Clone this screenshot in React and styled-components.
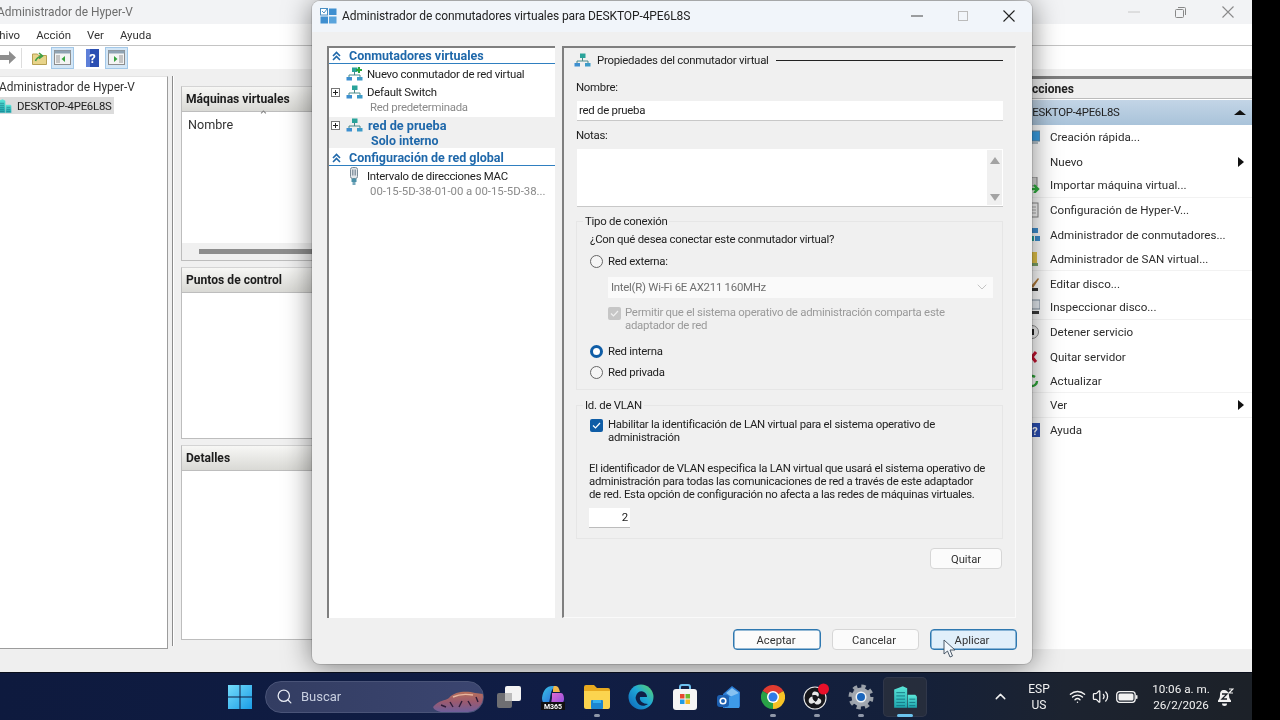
import React from "react";
import styled, { createGlobalStyle, css } from "styled-components";
import { Search, Wifi, Volume2, ChevronUp, ChevronDown } from "lucide-react";

const FONT = `Roboto, "Noto Sans", "Liberation Sans", sans-serif`;

const Global = createGlobalStyle`
  html, body { margin: 0; padding: 0; background: #000; overflow: hidden; }
  body { font-family: ${FONT}; font-size: 12px; color: #222; }
  * { box-sizing: border-box; }
`;

const uiText = css`font-size: 11.4px; letter-spacing: -0.26px;`;

const Screen = styled.div`
  position: relative; width: 1280px; height: 720px; overflow: hidden; background: #000;
  filter: blur(0.35px);
`;
const Desktop = styled.div`
  position: relative; width: 1252px; height: 672px; overflow: hidden; background: #f0f0f0;
`;

/* ---------- background window ---------- */
const HostWindow = styled.div`
  position: absolute; left: -30px; top: 0; width: 1282px; height: 672px;
  display: flex; flex-direction: column; background: #f0f0f0;
`;
const HostTitle = styled.div`
  height: 24px; display: flex; align-items: center; padding-left: 27px; flex: none;
  background: #f2f3f5; color: #6e6e6e; font-size: 11.9px;
`;
const HostControls = styled.div`margin-left: auto; display: flex; align-items: center;`;
const CtrlCell = styled.div`
  width: ${p => p.$w || 47}px; height: 23px; display: flex; align-items: center; justify-content: center;
  color: ${p => p.$c || "#999"};
`;
const MenuBar = styled.div`
  height: 22px; background: #fff; border-bottom: 1px solid #c4c4c4; display: flex; align-items: center;
  flex: none; gap: 16px; padding: 1px 0 0 12px; font-size: 11.4px; color: #333;
`;
const Toolbar = styled.div`
  height: 23px; background: #fff; display: flex; align-items: center; flex: none; padding-left: 30px;
`;
const ToolSep = styled.div`width: 1px; height: 20px; background: #ddd; margin: 0 6px 0 5px;`;
const ToolBtn = styled.div`
  width: 23px; height: 22px; display: flex; align-items: center; justify-content: center;
  margin-right: ${p => p.$mr || 0}px;
  ${p => p.$on && css`background: #d3e6f6; border: 1px solid #a3c8e8;`}
`;
const HostBody = styled.div`
  flex: 1; min-height: 0; display: flex; padding-top: 7px;
`;
const Tree = styled.div`
  width: 198px; background: #fff; border-right: 1px solid #9c9c9c; border-bottom: 1px solid #9c9c9c;
  padding-top: 3px; margin-bottom: 1px; border-top: 1px solid #e4e4e4; flex: none;
`;
const TreeRoot = styled.div`padding-left: 29px; height: 17px; line-height: 15px; font-size: 11.9px; color: #333;`;
const TreeNode = styled.div`
  margin-left: 14px; width: 130px; height: 17px; display: flex; align-items: center;
  gap: 5px; padding-left: 12px; background: #dcdcdc; color: #222; ${uiText}
`;
const Center = styled.div`
  width: 848px; margin-left: 4px; flex: none; padding: 10px 0 8px 8px;
  border-left: 1px solid #8c8c8c; margin-bottom: 4px; display: flex; flex-direction: column; gap: 6px;
  box-shadow: inset 1px 0 0 #fff;
`;
const Pane = styled.div`
  height: ${p => p.$h}px; flex: none; background: #fff; border: 1px solid #bdbdbd; border-top-color: #d4d4d4; position: relative;
  display: flex; flex-direction: column;
`;
const PaneHead = styled.div`
  height: 25px; flex: none; padding-left: 4px; display: flex; align-items: center;
  background: linear-gradient(#f7f7f5, #d9d9d5); border-bottom: 1px solid #bdbdbd;
  font-weight: 700; font-size: 12.1px; color: #1c1c1c;
`;
const ColHead = styled.div`
  padding: 5px 0 0 6px; font-size: 12.6px; color: #333; position: relative; flex: 1;
`;
const SortCaret = styled.span`position: absolute; left: 76px; top: -2px; color: #888; line-height: 1;`;
const HScroll = styled.div`
  height: 17px; flex: none; background: #f0f0f0; padding: 6px 0 0 17px;
`;
const HThumb = styled.div`height: 5px; width: 400px; background: #8d8d8d;`;

const Actions = styled.div`
  width: 232px; flex: none; display: flex; flex-direction: column; margin-bottom: 1px;
  background: #fff; border-top: 3px solid #7d7d7d;
`;
const ActionsHead = styled.div`
  height: 20px; flex: none; padding-left: 4px; display: flex; align-items: center; background: #f0f0f0;
  font-weight: 700; font-size: 12px; color: #222; border-bottom: 1px solid #bbb;
`;
const ActionsHost = styled.div`
  height: 25px; margin-top: 1px; flex: none; padding: 0 6px 1px 5px; display: flex; align-items: center; justify-content: space-between;
  background: linear-gradient(#c3d5e6, #a9c3da); color: #222; ${uiText}
`;
const ActionRow = styled.div`
  height: 24.4px; flex: none; display: flex; align-items: center; padding: 0 8px 0 4px; font-size: 11.6px; color: #2c2c2c;
  ${p => p.$sep && css`border-bottom: 1px solid #f2f2f2;`}
`;
const ActionIconBox = styled.div`width: 16px; height: 16px; margin-right: 10px; flex: none; display:flex;`;
const RightTri = styled.span`
  margin-left: auto; width: 0; height: 0; border-left: 6px solid #111; border-top: 5px solid transparent; border-bottom: 5px solid transparent;
`;
const UpTri = styled.span`
  width: 0; height: 0; border-bottom: 5px solid #111; border-left: 6px solid transparent; border-right: 6px solid transparent;
`;
const StatusBar = styled.div`height: 22px; flex: none; background: #efefef;`;

/* ---------- dialog ---------- */
const Dialog = styled.div`
  position: absolute; left: 312px; top: 1px; width: 720px; height: 663px; z-index: 2;
  background: #f0f0f0; border-radius: 8px; display: flex; flex-direction: column;
  box-shadow: 0 2px 28px rgba(0,0,0,.5), 0 0 0 1px rgba(0,0,0,.12);
`;
const DlgTitle = styled.div`
  height: 31px; flex: none; display: flex; align-items: center; padding: 0 0 2px 8px; border-radius: 8px 8px 0 0;
  background: #f1f5fa; font-size: 12px; letter-spacing: -0.1px; color: #222;
`;
const DlgTitleText = styled.span`margin-left: 5px;`;
const DlgControls = styled.div`margin-left: auto; display: flex; align-items: center;`;
const DlgMain = styled.div`
  flex: none; height: 572px; margin-top: 14px; padding: 0 16px 0 15px; display: flex; gap: 7px;
`;
const ListPanel = styled.div`
  width: 228px; flex: none; background: #fff; border-left: 2px solid #7f7f7f; border-top: 2px solid #7f7f7f;
`;
const ListHead = styled.div`
  height: 16px; padding-left: 3px; display: flex; align-items: center; gap: 8px;
  border-bottom: 1px solid #2f7fc0; color: #1f68aa; font-weight: 700; font-size: 12.5px;
  margin: ${p => p.$mt || 0}px 0 1px;
`;
const ListRow = styled.div`
  display: grid; grid-template-columns: 17px 21px 1fr; align-items: center; height: ${p => p.$h || 18}px; color: #222; ${uiText}
`;
const Expander = styled.span`
  width: 9px; height: 9px; margin-left: 2px; border: 1px solid #777; position: relative; display: block; background: #fff;
  &::before { content: ""; position: absolute; left: 1px; right: 1px; top: 3px; height: 1px; background: #222; }
  &::after { content: ""; position: absolute; top: 1px; bottom: 1px; left: 3px; width: 1px; background: #222; }
`;
const ListSub = styled.div`
  padding-left: 41px; margin-top: -1px; height: 15px; line-height: 15px; color: #8a8a8a; white-space: nowrap; ${uiText}
  ${p => p.$digits && css`letter-spacing: -0.02px;`}
`;
const ListSelected = styled.div`background: #f0f0f0; height: 31px; margin-top: 2px;`;
const BoldBlue = styled.span`color: #1f68aa; font-weight: 700; font-size: 12.7px; letter-spacing: 0; margin-left: ${p => p.$ml || 0}px;`;
const SelectedSub = styled.div`padding-left: 42px; height: 15px; line-height: 15px; color: #1f68aa; font-weight: 700; font-size: 12.4px;`;

const PropPanel = styled.div`
  flex: 1; min-width: 0; border-left: 2px solid #7f7f7f; border-top: 2px solid #7f7f7f; padding: 4px 12px 0 12px;
  border-bottom: 1px solid #fafafa; border-right: 1px solid #fafafa;
  display: flex; flex-direction: column; background: #f0f0f0;
`;
const PropHead = styled.div`height: 16px; margin-left: -2px; display: flex; align-items: center; gap: 6px; color: #222; line-height: 18px; ${uiText}`;
const PropRule = styled.div`flex: 1; height: 1px; background: #222; margin-left: 1px;`;
const FieldLabel = styled.div`height: 16px; line-height: 16px; margin-top: ${p => p.$mt}px; color: #222; ${uiText}`;
const TextField = styled.div`
  margin: 6px 0 0 1px; height: 20px; background: #fff; border-bottom: 1px solid #c8c8c8; padding: 0 2px;
  line-height: 18px; color: #222; ${uiText}
`;
const NotesField = styled.div`
  margin: 6px 0 0 1px; height: 58px; background: #fff; border-bottom: 1px solid #c8c8c8; display: flex; justify-content: flex-end;
`;
const NotesScroll = styled.div`
  width: 17px; background: #f0f0f0; border: 1px solid #fff; display: flex; flex-direction: column; align-items: center; justify-content: space-between; padding: 7px 0 4px;
`;
const ScrollArrow = styled.span`
  width: 0; height: 0; border-left: 5.5px solid transparent; border-right: 5.5px solid transparent;
  ${p => p.$up ? css`border-bottom: 7px solid #a3a3a3;` : css`border-top: 7px solid #a3a3a3;`}
`;
const Group = styled.div`
  position: relative; margin-top: ${p => p.$mt}px; height: ${p => p.$h}px; flex: none; border: 1px solid #e6e6e6;
  padding: ${p => p.$pt}px 10px 0 13px; display: flex; flex-direction: column; background: #f0f0f0;
`;
const Legend = styled.div`
  position: absolute; left: 6px; top: -8px; padding: 0 2px; background: #f0f0f0; height: 15px; line-height: 14px; color: #222; ${uiText}
`;
const Hint = styled.div`height: 16px; line-height: 17px; color: #222; ${uiText}`;
const RadioRow = styled.div`
  height: 16px; display: flex; align-items: center; gap: 5px; margin-top: ${p => p.$mt}px; color: #222; line-height: 18px; ${uiText}
`;
const Radio = styled.span`
  width: 13px; height: 13px; border-radius: 50%; flex: none; background: ${p => p.$on ? "#fff" : "#f5f5f5"};
  border: ${p => p.$on ? "3.5px solid #0f5da6" : "1px solid #666"};
`;
const SelectBox = styled.div`
  margin: 8px 0 0 18px; height: 21px; width: 385px; background: #fafafa; color: #6f6f6f; display: flex; align-items: center; justify-content: space-between;
  padding: 0 3px 1px 3px; ${uiText}
`;
const DisabledCheckRow = styled.div`margin: 8px 0 0 18px; display: flex; gap: 4px; height: 26px;`;
const DisabledText = styled.div`width: 345px; line-height: 13px; color: #9a9a9a; ${uiText}`;
const CheckBox = styled.span`
  width: 13px; height: 13px; margin-top: 1px; border-radius: 2px; flex: none; display: flex; align-items: center; justify-content: center;
  background: ${p => p.$on ? "#0f5da6" : "#c6c6c6"};
`;
const CheckRow = styled.div`display: flex; gap: 5px; height: 26px; line-height: 13px; color: #222; ${uiText}`;
const CheckText = styled.div`width: 360px;`;
const Para = styled.div`margin: 18px 0 0 -1px; line-height: 13px; width: 400px; color: #222; white-space: nowrap; ${uiText} letter-spacing: -0.3px;`;
const NumberField = styled.div`
  margin: 7px 0 0 -1px; height: 20px; width: 41px; background: #fff; border-bottom: 1px solid #bcbcbc; text-align: right; padding-right: 2px; line-height: 18px; ${uiText}
`;
const PushBtn = styled.div`
  border-radius: 4px; text-align: center; font-size: 11.2px; color: #333;
  width: ${p => p.$w}px; height: 21px; line-height: 21px; flex: none; padding-right: ${p => p.$pr || 0}px;
  background: ${p => p.$bg || "#fbfbfb"}; border: 1px solid ${p => p.$line || "#d6d6d6"};
  ${p => p.$thick && css`box-shadow: inset 0 0 0 0.5px ${p.$line};`}
`;
const QuitBtn = styled(PushBtn)`align-self: flex-end; margin: 9px 1px 0 0;`;
const DlgFooter = styled.div`
  flex: none; display: flex; justify-content: flex-end; gap: 11px; padding: 11px 15px 0 0;
`;

/* ---------- taskbar ---------- */
const Taskbar = styled.div`
  width: 1252px; height: 48px; display: flex; align-items: center; padding-left: 228px; position: relative; z-index: 3;
  background: linear-gradient(90deg, #0e1a3e 0%, #101d45 45%, #14203a 72%, #1c2330 85%, #1c2128 100%);
  border-top: 1px solid #0a0f1c;
`;
const SearchPill = styled.div`
  margin-left: 13px; width: 219px; height: 32px; border-radius: 16px; border: 1px solid #4a5478;
  background: linear-gradient(90deg, #333d62, #3b4570); color: #c8cfe0; display: flex; align-items: center; padding-left: 10px; gap: 8px;
  font-size: 13px; position: relative; overflow: hidden;
`;
const SearchArt = styled.svg`position: absolute; right: 0; top: 0;`;
const AppRow = styled.div`display: flex; margin-left: 3px; align-items: center;`;
const AppCell = styled.div`
  position: relative; width: 44px; height: 40px; display: flex; align-items: center; justify-content: center; border-radius: 5px;
  ${p => p.$active && css`background: #262d3c; box-shadow: inset 0 0 0 1px #30374a;`}
`;
const Pip = styled.span`
  position: absolute; bottom: 0; left: 50%; transform: translateX(-50%); height: 3px; border-radius: 2px;
  width: ${p => p.$wide ? 16 : 6}px; background: ${p => p.$wide ? "#6cc4ee" : "#8f97a8"};
`;
const Tray = styled.div`margin-left: auto; display: flex; align-items: center; color: #f2f2f2; padding-right: 17px;`;
const TrayCell = styled.div`
  width: ${p => p.$w}px; margin-left: ${p => p.$ml || 0}px; display: flex; align-items: center; justify-content: center;
  flex-direction: column; text-align: center; font-size: ${p => p.$fs || 11.7}px; line-height: 16px; white-space: nowrap;
`;
const CursorMark = styled.svg`position: absolute; left: 943px; top: 639px; z-index: 4;`;
const Block = styled.svg`display: block; flex: none;`;

/* ---------- icons ---------- */
const SwitchIcon = ({ plus }) => (
  <Block width="17" height="14" viewBox="0 0 17 14">
    <path d="M8.500 4v4M3 11V8h11v3" stroke="#4a8a8a" fill="none" />
    <rect x="6" y="0.500" width="5.500" height="4.500" fill="#2aa39a" />
    <rect x="0.500" y="10" width="5.500" height="3.500" fill="#3d8fd0" />
    <rect x="11" y="10" width="5.500" height="3.500" fill="#3d9bc8" />
    {plus && <path d="M12 0h2v2h2v2h-2v2h-2V4h-2V2h2z" fill="#27a53a" />}
  </Block>
);
const TitleIcon = () => (
  <Block width="17" height="16" viewBox="0 0 17 16">
    <rect x="0.500" y="0.500" width="7" height="6.500" fill="#fff" stroke="#4a8fc4" />
    <path d="M2 3l2 2 3-4" stroke="#4a8fc4" fill="none" />
    <rect x="9" y="0.500" width="7.500" height="6.500" fill="#3f8fd0" />
    <rect x="0.500" y="8.500" width="7.500" height="7" fill="#3f8fd0" />
    <rect x="9" y="8.500" width="7.500" height="7" fill="#5aa4dc" />
  </Block>
);
const DoubleUp = () => (
  <Block width="9" height="10" viewBox="0 0 9 10">
    <path d="M1 5l3.500-3.500L8 5M1 9l3.500-3.500L8 9" stroke="#1f68aa" strokeWidth="1.600" fill="none" />
  </Block>
);
const NicSlot = styled.span`display: block; padding-left: 3px;`;
const NicIcon = () => (
  <NicSlot>
    <Block width="10" height="18" viewBox="0 0 10 18">
      <rect x="1.500" y="0.500" width="7" height="11" rx="2" fill="#e2e6ea" stroke="#7a8a96" />
      <path d="M3.500 2.500v6M5 2.500v6M6.500 2.500v6" stroke="#8a98a4" />
      <rect x="2.500" y="11.500" width="5" height="3.500" fill="#4a90a8" />
      <rect x="3.500" y="15" width="3" height="3" fill="#76a8bc" />
    </Block>
  </NicSlot>
);
const FolderUp = () => (
  <Block width="15" height="14" viewBox="0 0 15 14">
    <path d="M0.500 3h5l1 1.500h8v9h-14z" fill="#e8d48a" stroke="#b7a052" />
    <path d="M3.500 10c1-3 3-4 6-5M7 2l3.500 3L7 7.500" stroke="#3fa046" strokeWidth="1.600" fill="none" />
  </Block>
);
const PanelIcon = ({ right }) => (
  <Block width="17" height="15" viewBox="0 0 17 15">
    <rect x="0.500" y="0.500" width="16" height="14" fill="#f4f4f4" stroke="#8d8d8d" />
    <rect x="0.500" y="0.500" width="16" height="3" fill="#8fa3b3" />
    <rect x={right ? 11 : 2} y="5" width="4" height="8" fill="#c4c4c4" />
    <path d={right ? "M6 6l3.500 3L6 12z" : "M11 6L7.500 9 11 12z"} fill="#36a33e" />
  </Block>
);
const HelpIcon = () => (
  <Block width="13" height="18" viewBox="0 0 13 18">
    <rect width="13" height="18" fill="#2b4fb3" />
    <rect x="0" y="0" width="4" height="18" fill="#5d7fd8" />
    <text x="6.500" y="14" textAnchor="middle" fontSize="13" fontWeight="700" fill="#fff" fontFamily={FONT}>?</text>
  </Block>
);
const BuildingIcon = ({ size = 16 }) => (
  <Block width={size} height={size} viewBox="0 0 24 24">
    <defs>
      <linearGradient id="bld" x1="0" y1="0" x2="0" y2="1"><stop offset="0" stopColor="#5be6d8" /><stop offset="1" stopColor="#1da6ae" /></linearGradient>
    </defs>
    <path d="M2 5l8-3 4 2v18H2z" fill="url(#bld)" />
    <path d="M14.500 10h7l1.500 1.500V22h-8.500z" fill="url(#bld)" />
    <path d="M4 8h8M4 11h8M4 14h8M4 17h8M4 20h8M16 14h5.500M16 17h5.500M16 20h5.500" stroke="#14707e" strokeWidth="0.800" />
  </Block>
);
const RowIcon = ({ kind }) => {
  const map = {
    quick: <><rect x="3" y="2" width="13" height="10" fill="#3aa0e6" stroke="#6a8aa0" /><rect x="6" y="13" width="8" height="2" fill="#b8c4cc" /></>,
    import: <><rect x="5" y="0" width="8" height="9" fill="#d8d8d8" stroke="#888" /><path d="M6 12h7M10 8l4 4-4 4" stroke="#2fae3e" strokeWidth="2.400" fill="none" /></>,
    config: <><rect x="5" y="1" width="9" height="14" fill="#fafafa" stroke="#8a8a8a" /><path d="M7 5h5M7 8h5M7 11h5" stroke="#aaa" /></>,
    switch: <><rect x="8" y="1" width="6" height="5" fill="#3f8fd0" /><rect x="5" y="9" width="5" height="5" fill="#2aa39a" /><rect x="11" y="9" width="5" height="5" fill="#3d8fd0" /></>,
    san: <><path d="M5 1h8v11H5z" fill="#e6c64a" /><path d="M5 12h9v3H5z" fill="#7fa56a" /></>,
    edit: <><path d="M7 10l7-8 1 1-6 9z" fill="#b07a3a" /><rect x="5" y="12" width="9" height="3" fill="#333" /></>,
    inspect: <><rect x="5" y="1" width="11" height="9" fill="#e8eef4" stroke="#7f8f9f" /><rect x="6" y="12" width="9" height="3" fill="#3a3a3a" /></>,
    stop: <><circle cx="8" cy="8" r="6.500" fill="#f2f2f2" stroke="#8a8a8a" /><rect x="6" y="5" width="4" height="6" fill="#222" /></>,
    remove: <path d="M4 3l8 10M12 3L4 13" stroke="#c41230" strokeWidth="3" />,
    refresh: <path d="M13 8a5 5 0 1 1-2-4" stroke="#2fa83a" strokeWidth="2.400" fill="none" />,
    help: <><rect x="6" y="1" width="10" height="14" fill="#2b4fb3" /><text x="11" y="12.500" textAnchor="middle" fontSize="11" fontWeight="700" fill="#fff" fontFamily={FONT}>?</text></>,
  };
  return <Block width="16" height="16" viewBox="0 0 16 16">{map[kind]}</Block>;
};

const WinLogo = () => (
  <Block width="24" height="24" viewBox="0 0 24 24">
    <defs><linearGradient id="w" x1="0" y1="0" x2="1" y2="1"><stop offset="0" stopColor="#74dcfb" /><stop offset="1" stopColor="#1a9ce6" /></linearGradient></defs>
    <path d="M0 0h11.500v11.500H0zM12.500 0H24v11.500H12.500zM0 12.500h11.500V24H0zM12.500 12.500H24V24H12.500z" fill="url(#w)" />
  </Block>
);
const TaskViewIcon = () => (
  <Block width="24" height="22" viewBox="0 0 24 22">
    <rect x="0" y="7" width="15" height="15" rx="2" fill="#6e6e72" />
    <rect x="8" y="0" width="16" height="15" rx="2" fill="#f3f3f3" />
    <rect x="8" y="7" width="7" height="8" fill="#bcbcbc" />
  </Block>
);
const M365Icon = () => (
  <Block width="26" height="26" viewBox="0 0 26 26">
    <defs>
      <linearGradient id="m1" x1="0" y1="0" x2="1" y2="1"><stop offset="0" stopColor="#38c6e8" /><stop offset="1" stopColor="#2b62d8" /></linearGradient>
      <linearGradient id="m2" x1="0" y1="0" x2="1" y2="1"><stop offset="0" stopColor="#e66ad0" /><stop offset="1" stopColor="#8a4fe0" /></linearGradient>
    </defs>
    <path d="M2 14C3 6 7 2 12 2h5c-5 1-6 6-7 12l-1 5H5c-2 0-3-2-3-5z" fill="url(#m1)" />
    <path d="M12 9h9c2 0 3 3 3 6 0 3-2 5-5 5h-8l1-6c0-3 0-5 0-5z" fill="url(#m2)" />
    <path d="M14 2h2c2 0 3 2 4 6h-7c0-3 0-5 1-6z" fill="#f2b84a" />
    <rect x="1" y="18" width="24" height="8" fill="#101010" />
    <text x="13" y="24.800" textAnchor="middle" fontSize="7" fontWeight="700" fill="#fff" fontFamily={FONT}>M365</text>
  </Block>
);
const FolderIcon = () => (
  <Block width="26" height="24" viewBox="0 0 26 24">
    <path d="M0 2a2 2 0 0 1 2-2h8l3 3h11a2 2 0 0 1 2 2v3H0z" fill="#e7a91f" />
    <path d="M0 6h26v16a2 2 0 0 1-2 2H2a2 2 0 0 1-2-2z" fill="#fbd44f" />
    <rect x="7" y="15" width="12" height="9" rx="1" fill="#1b86d0" />
    <rect x="9" y="15" width="8" height="3" fill="#35b0ee" />
  </Block>
);
const EdgeIcon = () => (
  <Block width="26" height="26" viewBox="0 0 26 26">
    <defs>
      <linearGradient id="e1" x1="0" y1="1" x2="1" y2="0"><stop offset="0" stopColor="#0c62b8" /><stop offset="0.550" stopColor="#1fa8d8" /><stop offset="1" stopColor="#5fd85f" /></linearGradient>
    </defs>
    <circle cx="13" cy="13" r="12.500" fill="url(#e1)" />
    <path d="M8 12c1-4 5-6 8-4 2 1 3 3 3 5h-7c-1 4 3 7 8 7-4 3-9 2-11-2-1-2-2-4-1-6z" fill="#102048" />
  </Block>
);
const StoreIcon = () => (
  <Block width="24" height="26" viewBox="0 0 24 26">
    <path d="M7 6V3a2 2 0 0 1 2-2h6a2 2 0 0 1 2 2v3" fill="none" stroke="#6dc0ee" strokeWidth="2" />
    <rect x="0" y="5" width="24" height="21" rx="3" fill="#f5f5f5" />
    <rect x="7" y="10" width="4.500" height="4.500" fill="#e8482f" />
    <rect x="12.500" y="10" width="4.500" height="4.500" fill="#6fb82e" />
    <rect x="7" y="15.500" width="4.500" height="4.500" fill="#1f9be6" />
    <rect x="12.500" y="15.500" width="4.500" height="4.500" fill="#f6b81f" />
  </Block>
);
const OutlookIcon = () => (
  <Block width="24" height="24" viewBox="0 0 24 24">
    <path d="M6 9L15 1l8 6v14a2 2 0 0 1-2 2H6z" fill="#2a7cd4" />
    <path d="M9 8l6-5 7 5-6 5z" fill="#86c2f2" />
    <path d="M8 14l14-6v15H8z" fill="#3e9ae8" />
    <rect x="0" y="10" width="12" height="12" rx="3" fill="#1c5fb0" />
    <circle cx="6" cy="16" r="2.800" fill="none" stroke="#fff" strokeWidth="1.600" />
  </Block>
);
const ChromeIcon = () => (
  <Block width="24" height="24" viewBox="0 0 24 24">
    <path d="M12 12L1.600 6A12 12 0 0 1 22.400 6z" fill="#df3b30" />
    <path d="M12 12L22.400 6A12 12 0 0 1 12 24z" fill="#f7c326" />
    <path d="M12 12L12 24A12 12 0 0 1 1.600 6z" fill="#29a247" />
    <circle cx="12" cy="12" r="6" fill="#fff" />
    <circle cx="12" cy="12" r="4.500" fill="#2f7be6" />
  </Block>
);
const ObsIcon = () => (
  <Block width="28" height="28" viewBox="0 0 28 28">
    <circle cx="12" cy="15" r="11" fill="#16161a" stroke="#e8e8e8" strokeWidth="1.100" />
    <path d="M12 8.500c3.500 0 5 3 3 5.500-1.200-2-3.500-2.500-5.500-1.500C8.500 10.500 10 8.500 12 8.500z" fill="#e8e8e8" />
    <path d="M6.500 20c-2-3 0-6 3-6.500-.3 2.500 1 4 3 5-2 2-4.500 3-6 1.500z" fill="#e8e8e8" />
    <path d="M18 19.500c-2 3-5.500 2.500-7 0 2.500-.5 3.800-2.500 4-4.500 2.500.5 4 2.500 3 4.500z" fill="#e8e8e8" />
    <circle cx="20.500" cy="6" r="5.500" fill="#e8102a" />
  </Block>
);
const GearIcon = () => (
  <Block width="26" height="26" viewBox="0 0 26 26">
    <circle cx="13" cy="13" r="10.500" fill="none" stroke="#9aa0a8" strokeWidth="4" strokeDasharray="4.250 4" />
    <circle cx="13" cy="13" r="9.500" fill="#a2a8b0" />
    <circle cx="13" cy="13" r="5.500" fill="#f0f4f8" />
    <circle cx="13" cy="13" r="4" fill="#1b66bc" />
  </Block>
);
const BatteryIcon = () => (
  <Block width="22" height="12" viewBox="0 0 22 12">
    <rect x="0.700" y="0.700" width="18.500" height="10.600" rx="3" fill="none" stroke="#f2f2f2" strokeWidth="1.300" />
    <rect x="2.500" y="2.500" width="15" height="7" rx="1.500" fill="#f2f2f2" />
    <rect x="20" y="4" width="1.500" height="4" rx="0.700" fill="#f2f2f2" />
  </Block>
);
const BellIcon = () => (
  <Block width="17" height="18" viewBox="0 0 17 18">
    <path d="M7 2c-3 0-4 2-4 5 0 3-1 4-2 5.500V14h13v-1.500c-1-1.500-2-2.500-2-5 0-3-2-5.500-5-5.500z" fill="#f2f2f2" />
    <path d="M5 15.500h5a2.500 2.500 0 0 1-5 0z" fill="#f2f2f2" />
    <path d="M5 6h5L5 11h5" stroke="#1c2128" strokeWidth="1.300" fill="none" />
    <path d="M12 1h4l-4 4h4" stroke="#f2f2f2" strokeWidth="1.200" fill="none" />
  </Block>
);

const actions = [
  ["quick", "Creación rápida..."],
  [null, "Nuevo", true],
  ["import", "Importar máquina virtual...", false, true],
  ["config", "Configuración de Hyper-V..."],
  ["switch", "Administrador de conmutadores..."],
  ["san", "Administrador de SAN virtual...", false, true],
  ["edit", "Editar disco..."],
  ["inspect", "Inspeccionar disco...", false, true],
  ["stop", "Detener servicio"],
  ["remove", "Quitar servidor"],
  ["refresh", "Actualizar", false, true],
  [null, "Ver", true, true],
  ["help", "Ayuda"],
];

const MinLine = ({ c = "#222" }) => <Block width="12" height="2" viewBox="0 0 12 2"><path d="M0 1h12" stroke={c} /></Block>;
const CloseX = ({ c = "#222", s = 12 }) => <Block width={s} height={s} viewBox="0 0 12 12"><path d="M.5.5l11 11M11.500.5l-11 11" stroke={c} strokeWidth="1.100" /></Block>;
const MaxBox = ({ c = "#bbb" }) => <Block width="10" height="10" viewBox="0 0 10 10"><rect x=".5" y=".5" width="9" height="9" fill="none" stroke={c} /></Block>;
const RestoreBox = ({ c = "#888" }) => <Block width="11" height="11" viewBox="0 0 11 11"><rect x=".5" y="2.500" width="8" height="8" rx="1" fill="none" stroke={c} /><path d="M3 .5h6.500a1 1 0 0 1 1 1V8" fill="none" stroke={c} /></Block>;
const Tick = ({ c }) => <Block width="9" height="9" viewBox="0 0 9 9"><path d="M1 4.500l2.500 2.500L8 2" stroke={c} strokeWidth="1.200" fill="none" /></Block>;

export default function App() {
  return (
    <Screen>
      <Global />
      <Desktop>
        <HostWindow>
          <HostTitle>
            Administrador de Hyper-V
            <HostControls>
              <CtrlCell><MinLine c="#c8c8c8" /></CtrlCell>
              <CtrlCell><RestoreBox /></CtrlCell>
              <CtrlCell $w={48}><CloseX c="#8a8a8a" /></CtrlCell>
            </HostControls>
          </HostTitle>
          <MenuBar>
            <span>Archivo</span><span>Acción</span><span>Ver</span><span>Ayuda</span>
          </MenuBar>
          <Toolbar>
            <Block width="16" height="13" viewBox="0 0 16 13"><path d="M0 4h9V0l7 6.500L9 13V9H0z" fill="#8e8e8e" /></Block>
            <ToolSep />
            <ToolBtn><FolderUp /></ToolBtn>
            <ToolBtn $on $mr={7}><PanelIcon /></ToolBtn>
            <ToolBtn $mr={1}><HelpIcon /></ToolBtn>
            <ToolBtn $on><PanelIcon right /></ToolBtn>
          </Toolbar>
          <HostBody>
            <Tree>
              <TreeRoot>Administrador de Hyper-V</TreeRoot>
              <TreeNode><BuildingIcon size={16} />DESKTOP-4PE6L8S</TreeNode>
            </Tree>
            <Center>
              <Pane $h={175}>
                <PaneHead>Máquinas virtuales</PaneHead>
                <ColHead>Nombre<SortCaret>⌃</SortCaret></ColHead>
                <HScroll><HThumb /></HScroll>
              </Pane>
              <Pane $h={172}><PaneHead>Puntos de control</PaneHead></Pane>
              <Pane $h={195}><PaneHead>Detalles</PaneHead></Pane>
            </Center>
            <Actions>
              <ActionsHead>Acciones</ActionsHead>
              <ActionsHost>DESKTOP-4PE6L8S<UpTri /></ActionsHost>
              {actions.map(([icon, label, sub, sep]) => (
                <ActionRow key={label} $sep={sep}>
                  <ActionIconBox>{icon && <RowIcon kind={icon} />}</ActionIconBox>
                  {label}
                  {sub && <RightTri />}
                </ActionRow>
              ))}
            </Actions>
          </HostBody>
          <StatusBar />
        </HostWindow>

        <Dialog>
          <DlgTitle>
            <TitleIcon />
            <DlgTitleText>Administrador de conmutadores virtuales para DESKTOP-4PE6L8S</DlgTitleText>
            <DlgControls>
              <CtrlCell $w={46} $c="#222"><MinLine c="#444" /></CtrlCell>
              <CtrlCell $w={46}><MaxBox /></CtrlCell>
              <CtrlCell $w={46}><CloseX /></CtrlCell>
            </DlgControls>
          </DlgTitle>
          <DlgMain>
            <ListPanel>
              <ListHead><DoubleUp />Conmutadores virtuales</ListHead>
              <ListRow><span /><SwitchIcon plus /><span>Nuevo conmutador de red virtual</span></ListRow>
              <ListRow><Expander /><SwitchIcon /><span>Default Switch</span></ListRow>
              <ListSub>Red predeterminada</ListSub>
              <ListSelected>
                <ListRow $h={16}><Expander /><SwitchIcon /><BoldBlue $ml={1}>red de prueba</BoldBlue></ListRow>
                <SelectedSub>Solo interno</SelectedSub>
              </ListSelected>
              <ListHead $mt={2}><DoubleUp />Configuración de red global</ListHead>
              <ListRow><span /><NicIcon /><span>Intervalo de direcciones MAC</span></ListRow>
              <ListSub $digits>00-15-5D-38-01-00 a 00-15-5D-38...</ListSub>
            </ListPanel>
            <PropPanel>
              <PropHead><SwitchIcon /><span>Propiedades del conmutador virtual</span><PropRule /></PropHead>
              <FieldLabel $mt={11}>Nombre:</FieldLabel>
              <TextField>red de prueba</TextField>
              <FieldLabel $mt={6}>Notas:</FieldLabel>
              <NotesField><NotesScroll><ScrollArrow $up /><ScrollArrow /></NotesScroll></NotesField>
              <Group $mt={14} $h={169} $pt={9}>
                <Legend>Tipo de conexión</Legend>
                <Hint>¿Con qué desea conectar este conmutador virtual?</Hint>
                <RadioRow $mt={6}><Radio />Red externa:</RadioRow>
                <SelectBox>Intel(R) Wi-Fi 6E AX211 160MHz<ChevronDown size={16} color="#b0b0b0" strokeWidth={1.1} /></SelectBox>
                <DisabledCheckRow>
                  <CheckBox><Tick c="#f0f0f0" /></CheckBox>
                  <DisabledText>Permitir que el sistema operativo de administración comparta este<br />adaptador de red</DisabledText>
                </DisabledCheckRow>
                <RadioRow $mt={11}><Radio $on />Red interna</RadioRow>
                <RadioRow $mt={5}><Radio />Red privada</RadioRow>
              </Group>
              <Group $mt={15} $h={134} $pt={12}>
                <Legend>Id. de VLAN</Legend>
                <CheckRow>
                  <CheckBox $on><Tick c="#fff" /></CheckBox>
                  <CheckText>Habilitar la identificación de LAN virtual para el sistema operativo de<br />administración</CheckText>
                </CheckRow>
                <Para>
                  El identificador de VLAN especifica la LAN virtual que usará el sistema operativo de<br />
                  administración para todas las comunicaciones de red a través de este adaptador<br />
                  de red. Esta opción de configuración no afecta a las redes de máquinas virtuales.
                </Para>
                <NumberField>2</NumberField>
              </Group>
              <QuitBtn $w={72}>Quitar</QuitBtn>
            </PropPanel>
          </DlgMain>
          <DlgFooter>
            <PushBtn $w={88} $line="#2f78b0" $thick $pr={2}>Aceptar</PushBtn>
            <PushBtn $w={87} $pr={3}>Cancelar</PushBtn>
            <PushBtn $w={87} $line="#2f78b0" $bg="#e1effa" $thick $pr={3}>Aplicar</PushBtn>
          </DlgFooter>
        </Dialog>
      </Desktop>

      <Taskbar>
        <WinLogo />
        <SearchPill>
          <Search size={17} color="#e6e9f2" strokeWidth={1.8} />
          Buscar
          <SearchArt width="52" height="30" viewBox="0 0 52 30">
            <defs><linearGradient id="art" x1="0" y1="0" x2="0" y2="1"><stop offset="0" stopColor="#b8705a" /><stop offset="0.500" stopColor="#9a5a70" /><stop offset="1" stopColor="#6e5f9c" /></linearGradient></defs>
            <path d="M2 25C8 18 14 19 18 16 24 9 36 9 44 11l8 1v18H10C6 29 3 28 2 25z" fill="url(#art)" />
            <path d="M10 23l5 2M19 20l3 5M28 25l3-6M37 19l3 5M45 15l2 5" stroke="#2e1c38" strokeWidth="1.400" />
            <path d="M22 15c6-3 14-3 20-2" stroke="#e8b8a0" strokeWidth="1.400" fill="none" />
          </SearchArt>
        </SearchPill>
        <AppRow>
          <AppCell><TaskViewIcon /></AppCell>
          <AppCell><M365Icon /></AppCell>
          <AppCell><FolderIcon /><Pip /></AppCell>
          <AppCell><EdgeIcon /></AppCell>
          <AppCell><StoreIcon /></AppCell>
          <AppCell><OutlookIcon /></AppCell>
          <AppCell><ChromeIcon /><Pip /></AppCell>
          <AppCell><ObsIcon /><Pip /></AppCell>
          <AppCell><GearIcon /><Pip /></AppCell>
          <AppCell $active><BuildingIcon size={26} /><Pip $wide /></AppCell>
        </AppRow>
        <Tray>
          <TrayCell $w={24}><ChevronUp size={17} strokeWidth={2} /></TrayCell>
          <TrayCell $w={38} $ml={8} $fs={12}><span>ESP</span><span>US</span></TrayCell>
          <TrayCell $w={20} $ml={9}><Wifi size={17} strokeWidth={2} /></TrayCell>
          <TrayCell $w={20} $ml={3}><Volume2 size={17} strokeWidth={1.8} /></TrayCell>
          <TrayCell $w={26} $ml={4}><BatteryIcon /></TrayCell>
          <TrayCell $w={66} $ml={8}><span>10:06 a. m.</span><span>26/2/2026</span></TrayCell>
          <TrayCell $w={20} $ml={1}><BellIcon /></TrayCell>
        </Tray>
      </Taskbar>

      <CursorMark width="14" height="20" viewBox="0 0 14 20">
        <path d="M1 1v14l3.500-3 2.500 6 2.500-1-2.500-6h5z" fill="#f4f8fc" stroke="#3a4a5a" strokeWidth="0.900" />
      </CursorMark>
    </Screen>
  );
}
